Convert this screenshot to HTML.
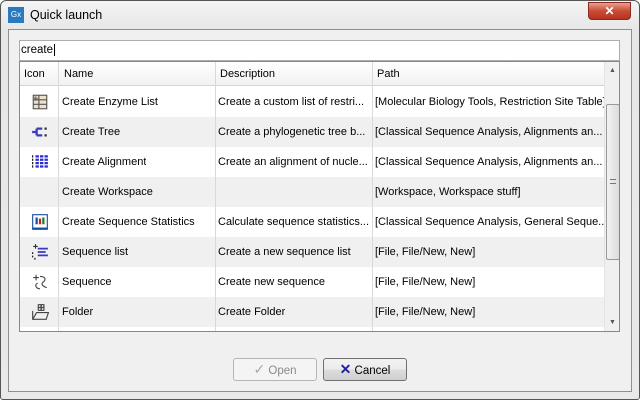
<!DOCTYPE html>
<html><head><style>
*{margin:0;padding:0;box-sizing:border-box}
body{width:640px;height:400px;overflow:hidden;background:#fff;font-family:"Liberation Sans",sans-serif;font-size:11px;color:#000;position:relative}
.win{position:absolute;left:0;top:0;width:640px;height:400px;border:1px solid #555;border-radius:6px 6px 3px 3px;background:linear-gradient(#f4f4f4,#e6e6e6 30px,#e9e9e9)}
.title{position:absolute;left:30px;top:8px;font-size:12.5px}
.logo{position:absolute;left:8px;top:7px;width:16px;height:16px;background:#2a7ac0;color:#fff;font-size:8px;line-height:16px;text-align:center}
.close{position:absolute;left:588px;top:2px;width:43px;height:18px;border:1px solid #8a2a1e;border-radius:0 0 4px 4px;background:linear-gradient(#e8a090,#c94a35 50%,#b8321f);color:#fff;font-weight:bold;text-align:center;line-height:16px;font-size:12px}
.panel{position:absolute;left:8px;top:29px;width:624px;height:363px;background:#f0f0f0;border:1px solid #8e8f8f}
.search{position:absolute;left:19px;top:40px;width:601px;height:21px;background:#fff;border:1px solid #abadb3;padding:3px 1px;font-size:11.5px}
.table{position:absolute;left:19px;top:61px;width:601px;height:271px;border:1px solid #828790;background:#fff;overflow:hidden}
.hdr{position:absolute;left:0;top:0;width:584px;height:24px;background:linear-gradient(#fff,#f2f2f2);border-bottom:1px solid #d5d5d5}
.hdr div{position:absolute;top:6px}
.row{position:absolute;left:0;width:584px;height:30px}
.row div{position:absolute;top:9px;white-space:nowrap;overflow:hidden}
.g{background:#f0f0f0}
.vl{position:absolute;top:0;width:1px;height:271px;background:#d9d9d9}
.sb{position:absolute;left:584px;top:0;width:16px;height:269px;background:#f0f0f0;border-left:1px solid #e4e4e4}
.thumb{position:absolute;left:1px;top:42px;width:14px;height:156px;border:1px solid #999;border-radius:2px;background:linear-gradient(90deg,#f2f2f2,#dcdcdc)}
.btn{position:absolute;top:358px;width:84px;height:23px;border:1px solid #707070;border-radius:3px;background:linear-gradient(#f2f2f2,#ebebeb 50%,#dddddd 51%,#cfcfcf);font-size:11.5px;line-height:21px;text-align:center}
.ic{position:absolute;left:11px;top:6px;width:18px;height:18px}
</style></head><body>
<div class="win"></div>
<div class="logo">Gx</div>
<div class="title">Quick launch</div>
<div class="close">✕</div>
<div class="panel"></div>
<div class="search">create<span style="border-left:1px solid #000;margin-left:1px"></span></div>
<div class="table">
<div class="hdr"><div style="left:4px">Icon</div><div style="left:44px">Name</div><div style="left:200px">Description</div><div style="left:357px">Path</div></div>
<div class="row" style="top:25px">
<svg class="ic" viewBox="0 0 16 16"><rect x="2" y="2" width="12" height="12" fill="#f0e0c8" stroke="#555"/><path d="M2 6h12M2 10h12M7 2v12" stroke="#555"/><path d="M4 3v4M2 5h4" stroke="#777" stroke-width="1.5"/></svg>
<div style="left:42px">Create Enzyme List</div><div style="left:198px;width:155px">Create a custom list of restri...</div><div style="left:355px;width:229px">[Molecular Biology Tools, Restriction Site Table]</div></div>
<div class="row g" style="top:55px">
<svg class="ic" viewBox="0 0 16 16"><path d="M1 8h4M5 5v6M5 5h5M5 11h5" stroke="#3a3ab8" stroke-width="2"/><rect x="12" y="4" width="2" height="2" fill="#333"/><rect x="12" y="10" width="2" height="2" fill="#333"/></svg>
<div style="left:42px">Create Tree</div><div style="left:198px">Create a phylogenetic tree b...</div><div style="left:355px">[Classical Sequence Analysis, Alignments an...</div></div>
<div class="row" style="top:85px">
<svg class="ic" viewBox="0 0 16 16"><path d="M1 3h1M1 6h1M1 9h1M1 12h1" stroke="#000" stroke-width="2"/><path d="M4 3h11M4 6h11M4 9h11M4 12h11" stroke="#2a2ad0" stroke-width="2" stroke-dasharray="3 1"/></svg>
<div style="left:42px">Create Alignment</div><div style="left:198px">Create an alignment of nucle...</div><div style="left:355px">[Classical Sequence Analysis, Alignments an...</div></div>
<div class="row g" style="top:115px"><div style="left:42px">Create Workspace</div><div style="left:355px">[Workspace, Workspace stuff]</div></div>
<div class="row" style="top:145px">
<svg class="ic" viewBox="0 0 16 16"><rect x="1.5" y="1.5" width="13" height="12" fill="#fff" stroke="#1a4fa0"/><rect x="4" y="4" width="2" height="6" fill="#1a4fa0"/><rect x="7" y="5" width="2" height="5" fill="#d02020"/><rect x="10" y="4" width="2" height="6" fill="#208020"/><path d="M1 14h14" stroke="#1a4fa0" stroke-width="2"/></svg>
<div style="left:42px">Create Sequence Statistics</div><div style="left:198px">Calculate sequence statistics...</div><div style="left:355px">[Classical Sequence Analysis, General Seque...</div></div>
<div class="row g" style="top:175px">
<svg class="ic" viewBox="0 0 16 16"><path d="M6 5h9M6 8h7M6 11h9" stroke="#3a3ab8" stroke-width="1.5"/><path d="M2 3h4M4 1v4" stroke="#333"/><path d="M1 9h1M1 12h1M3 14h1" stroke="#000" stroke-width="1.5"/></svg>
<div style="left:42px">Sequence list</div><div style="left:198px">Create a new sequence list</div><div style="left:355px">[File, File/New, New]</div></div>
<div class="row" style="top:205px">
<svg class="ic" viewBox="0 0 16 16" fill="none" stroke="#444"><path d="M2 4h5M4.5 1.5v5"/><path d="M8 3c4 0 6 2 3 5-3 2 0 4 3 5M6 9c-3 1-2 5 2 5"/></svg>
<div style="left:42px">Sequence</div><div style="left:198px">Create new sequence</div><div style="left:355px">[File, File/New, New]</div></div>
<div class="row g" style="top:235px">
<svg class="ic" viewBox="0 0 16 16" fill="none" stroke="#444"><path d="M1.5 7v7.5h12l2-6H5l-3.5 6"/><path d="M6 4h6M9 1v6" stroke-width="1.2"/><rect x="6.5" y="1.5" width="5" height="5"/></svg>
<div style="left:42px">Folder</div><div style="left:198px">Create Folder</div><div style="left:355px">[File, File/New, New]</div></div>
<div class="row" style="top:265px"></div>
<div class="vl" style="left:38px"></div><div class="vl" style="left:195px"></div><div class="vl" style="left:352px"></div>
<div class="sb"><div style="position:absolute;left:4px;top:5px;font-size:7px;color:#555">▲</div><div class="thumb"><div style="position:absolute;left:3px;top:74px;width:6px;height:5px;border-top:1px solid #777;border-bottom:1px solid #777"></div></div><div style="position:absolute;left:4px;top:257px;font-size:7px;color:#555">▼</div></div>
</div>
<div class="btn" style="left:233px;color:#8a8a8a;border-color:#b5b5b5;background:#f4f4f4"><span style="color:#aaa;font-size:14px">✓</span> Open</div>
<div class="btn" style="left:323px"><span style="color:#22229a;font-weight:bold;font-size:14px">✕</span> Cancel</div>
</body></html>
